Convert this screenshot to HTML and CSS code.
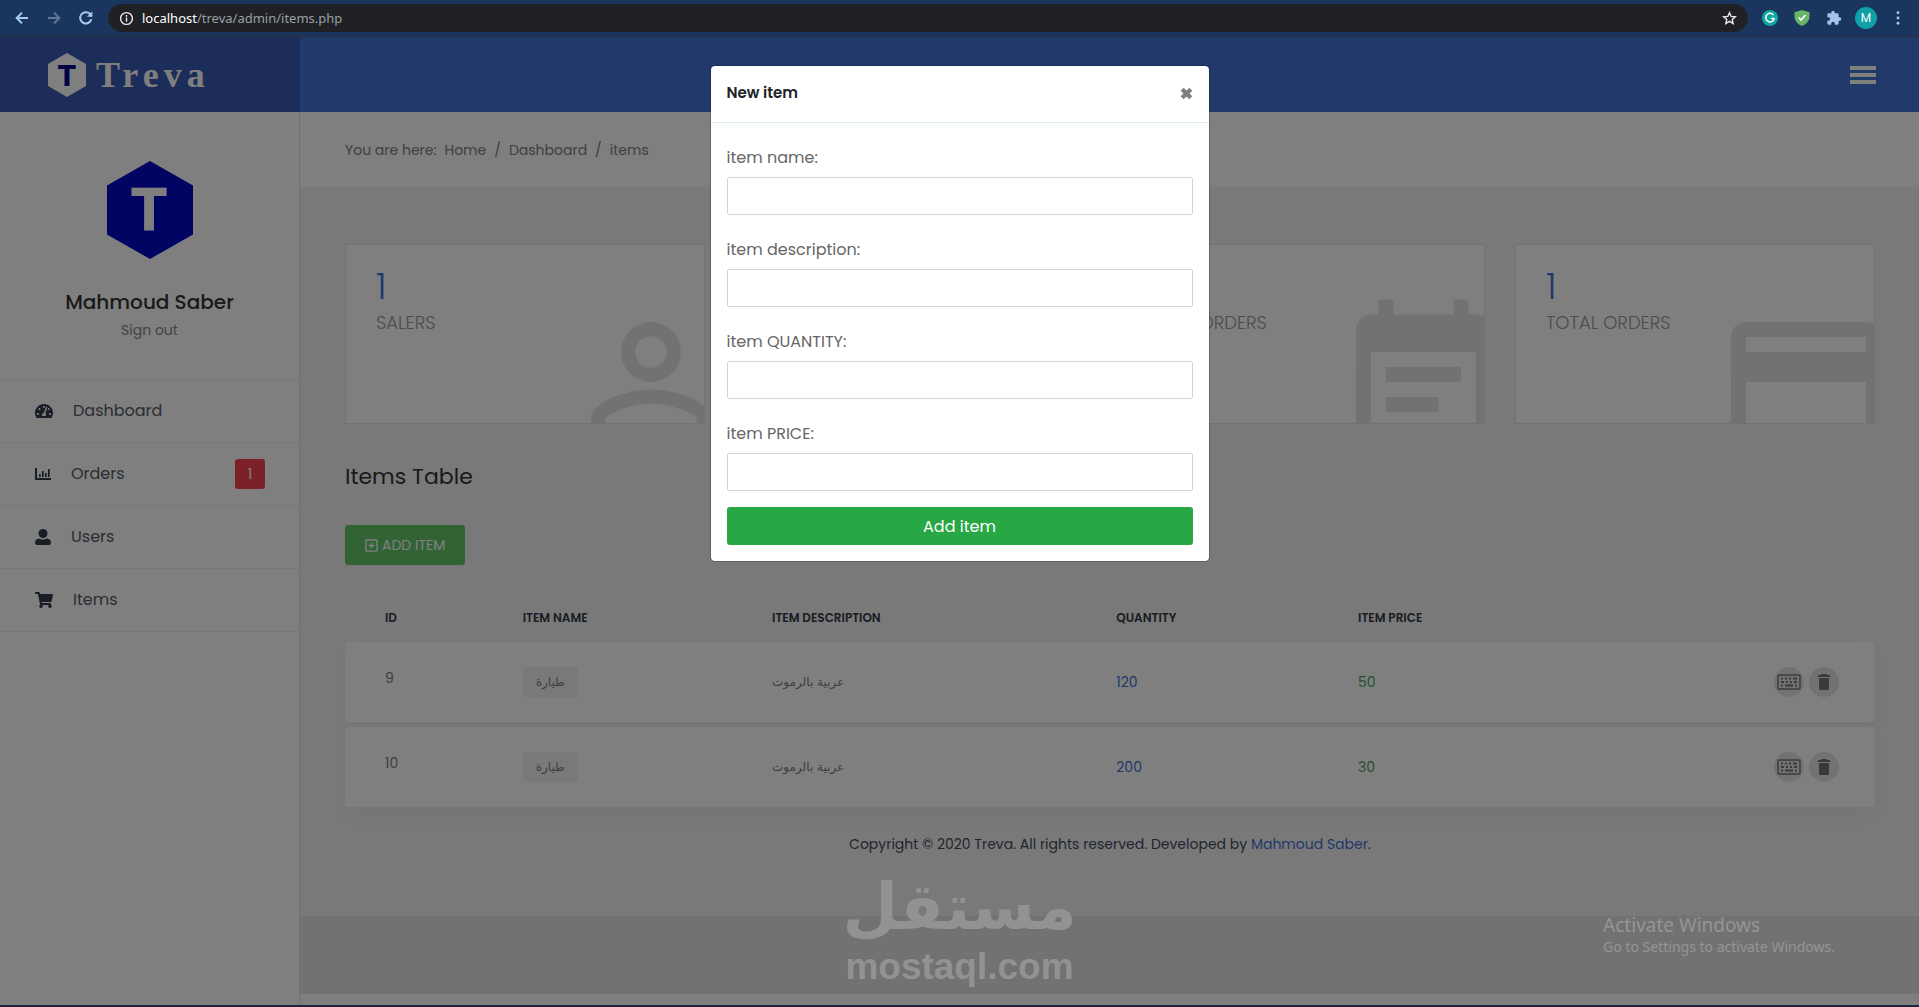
FILE: index.html
```html
<!DOCTYPE html>
<html lang="en">
<head>
  <meta charset="UTF-8">
  <meta name="viewport" content="width=device-width, initial-scale=1.0">
  <title>Treva - Items</title>
  <link rel="stylesheet" href="styles.css">
</head>
<body>
  <!-- BROWSER BAR -->
  <div class="browser-bar">
    <button class="browser-btn" aria-label="Back"><svg viewBox="0 0 24 24"><path d="M21 12H4M12 4l-8 8 8 8"/></svg></button>
    <button class="browser-btn browser-btn-off" aria-label="Forward"><svg viewBox="0 0 24 24"><path d="M3 12h17M12 4l8 8-8 8"/></svg></button>
    <button class="browser-btn" aria-label="Reload"><svg viewBox="0 0 24 24"><path d="M20 14a8.500 8.500 0 1 1-2-8l2.500 3"/><path d="M21.500 2v8h-8z" fill="currentColor" stroke="none"/></svg></button>
    <div class="address">
      <svg class="address-info" viewBox="0 0 16 16"><circle cx="8" cy="8" r="6.300"/><path d="M8 7v4.500M8 4.300v1.700"/></svg>
      <span class="address-url"><b>localhost</b>/treva/admin/items.php</span>
      <svg class="address-star" viewBox="0 0 16 16"><path d="M8 1.800l1.800 4 4.400.4-3.300 2.900 1 4.300L8 11.100l-3.900 2.300 1-4.300-3.300-2.900 4.400-.4z"/></svg>
    </div>
    <div class="extensions">
      <button class="browser-btn" aria-label="Grammar"><svg class="ext-g" viewBox="0 0 16 16"><circle cx="8" cy="8" r="8" fill="#11a8a0"/><path d="M11.500 5A4.300 4.300 0 1 0 12 9.500V8.600H9" fill="none" stroke="#fff" stroke-width="1.500"/></svg></button>
      <button class="browser-btn" aria-label="Shield"><svg class="ext-g" viewBox="0 0 16 16"><path d="M8 0l7.500 2.300v4.500C15.500 11 12 14.500 8 16 4 14.500.5 11 .5 6.800V2.300z" fill="#67b567"/><path d="M4.500 7.500l2.500 2.500 4.500-5" fill="none" stroke="#fff" stroke-width="1.600"/></svg></button>
      <button class="browser-btn" aria-label="Extensions"><svg class="ext-g" viewBox="0 0 24 24"><path fill="#a5c5e8" d="M20.500 11H19V7a2 2 0 0 0-2-2h-4V3.500a2.500 2.500 0 0 0-5 0V5H4a2 2 0 0 0-2 2v3.800h1.500a2.700 2.700 0 0 1 0 5.400H2V20a2 2 0 0 0 2 2h3.800v-1.500a2.700 2.700 0 0 1 5.400 0V22H17a2 2 0 0 0 2-2v-4h1.500a2.500 2.500 0 0 0 0-5z"/></svg></button>
      <button class="browser-btn" aria-label="Profile"><span class="avatar">M</span></button>
      <button class="browser-btn" aria-label="Menu"><svg viewBox="0 0 24 24"><g fill="#a5c5e8" stroke="none"><circle cx="12" cy="4" r="2.200"/><circle cx="12" cy="12" r="2.200"/><circle cx="12" cy="20" r="2.200"/></g></svg></button>
    </div>
  </div>

  <div class="page">
    <!-- SIDEBAR -->
    <aside class="sidebar">
      <a class="logo" href="#">
        <svg class="logo-mark" viewBox="0 0 38 44"><polygon points="19,0 38,11 38,33 19,44 0,33 0,11" fill="#fff"/><text class="mark-text" x="19" y="33" font-size="29" fill="#04048c">T</text></svg>
        <span class="logo-name">Treva</span>
      </a>
      <div class="account">
        <svg class="account-img" viewBox="0 0 86 98"><polygon points="43,0 86,24.500 86,73.500 43,98 0,73.500 0,24.500" fill="#0408c8"/><text class="mark-text" x="42" y="70" font-size="58" fill="#fff">T</text></svg>
        <h4>Mahmoud Saber</h4>
        <a href="#">Sign out</a>
      </div>
      <nav class="menu">
        <a href="#">
          <svg width="18" height="16" viewBox="0 0 576 512"><path d="M288 32C128.940 32 0 160.940 0 320c0 52.800 14.250 102.260 39.060 144.800 5.610 9.620 16.300 15.200 27.440 15.200h443c11.140 0 21.830-5.580 27.440-15.200C561.750 422.260 576 372.800 576 320c0-159.060-128.940-288-288-288zm0 64c14.710 0 26.580 10.130 30.320 23.650-1.110 2.260-2.640 4.230-3.450 6.670l-9.220 27.670c-5.130 3.490-10.970 6.010-17.640 6.010-17.670 0-32-14.330-32-32S270.330 96 288 96zM96 384c-17.670 0-32-14.330-32-32s14.330-32 32-32 32 14.330 32 32-14.330 32-32 32zm48-160c-17.670 0-32-14.330-32-32s14.330-32 32-32 32 14.330 32 32-14.330 32-32 32zm246.770-72.410l-61.330 184C343.130 347.330 352 364.540 352 384c0 11.720-3.380 22.550-8.880 32H232.880c-5.500-9.450-8.880-20.280-8.880-32 0-33.940 26.500-61.430 59.900-63.590l61.340-184.010c4.170-12.560 17.730-19.450 30.360-15.170 12.570 4.190 19.350 17.790 15.170 30.360zm14.660 57.200l15.520-46.550c3.470-1.290 7.130-2.230 11.050-2.230 17.670 0 32 14.330 32 32s-14.330 32-32 32c-11.380-.01-20.890-6.280-26.570-15.220zM480 384c-17.670 0-32-14.330-32-32s14.330-32 32-32 32 14.330 32 32-14.330 32-32 32z"/></svg>
          Dashboard
        </a>
        <a href="#">
          <svg width="16" height="16" viewBox="0 0 16 16"><path d="M0 2h2v10h14v2H0zM4 8h1.700v3H4zM7 5h1.700v6H7zM10 7h1.700v4H10zM13 3h1.700v8H13z"/></svg>
          Orders
          <span class="count">1</span>
        </a>
        <a href="#">
          <svg width="16" height="16" viewBox="0 0 16 16"><circle cx="8" cy="4.500" r="4.500"/><path d="M4 9.500c1 .6 2.500 1 4 1s3-.4 4-1c2.400.2 4 2 4 4V14a2 2 0 0 1-2 2H2a2 2 0 0 1-2-2v-.5c0-2 1.600-3.800 4-4z"/></svg>
          Users
        </a>
        <a href="#">
          <svg width="18" height="16" viewBox="0 0 576 512"><path d="M528.120 301.319l47.273-208C578.806 78.301 567.391 64 551.990 64H159.208l-9.166-44.810C147.758 8.021 137.930 0 126.529 0H24C10.745 0 0 10.745 0 24v16c0 13.255 10.745 24 24 24h69.883l70.248 343.435C147.325 417.100 136 435.222 136 456c0 30.928 25.072 56 56 56s56-25.072 56-56c0-15.674-6.447-29.835-16.824-40h209.647C430.447 426.165 424 440.326 424 456c0 30.928 25.072 56 56 56s56-25.072 56-56c0-22.172-12.888-41.332-31.579-50.405l5.517-24.276c3.413-15.018-8.002-29.319-23.403-29.319H218.117l-6.545-32h293.145c11.206 0 20.920-7.754 23.403-18.681z"/></svg>
          Items
        </a>
      </nav>
    </aside>

    <!-- MAIN -->
    <main class="main">
      <header class="topbar">
        <button class="hamburger" aria-label="Menu"><i></i><i></i><i></i></button>
      </header>
      <div class="breadcrumb">
        <span>You are here:</span>
        <a href="#">Home</a><span>/</span>
        <a href="#">Dashboard</a><span>/</span>
        <span>items</span>
      </div>

      <div class="content">
        <div class="stats">
          <div class="stat">
            <h2>1</h2>
            <p>salers</p>
            <svg class="stat-icon" viewBox="4 0 16 24"><path d="M12,4A4,4 0 0,1 16,8A4,4 0 0,1 12,12A4,4 0 0,1 8,8A4,4 0 0,1 12,4M12,5.900A2.100,2.100 0 1,0 14.100,8A2.100,2.100 0 0,0 12,5.900M12,13C14.670,13 20,14.330 20,17V20H4V17C4,14.330 9.330,13 12,13M12,14.900C9.030,14.900 5.900,16.360 5.900,17V18.100H18.100V17C18.100,16.360 14.970,14.900 12,14.900Z"/></svg>
          </div>
          <div class="stat"></div>
          <div class="stat">
            <h2>1</h2>
            <p>new orders</p>
            <svg class="stat-icon" viewBox="3 0 18 24"><path d="M17 10H7v2h10v-2zm2-7h-1V1h-2v2H8V1H6v2H5c-1.110 0-1.990.9-1.990 2L3 19a2 2 0 0 0 2 2h14c1.100 0 2-.9 2-2V5c0-1.100-.9-2-2-2zm0 16H5V8h14v11zm-5-5H7v2h7v-2z"/></svg>
          </div>
          <div class="stat">
            <h2>1</h2>
            <p>total orders</p>
            <svg class="stat-icon" viewBox="2 0 20 24"><path d="M20 4H4c-1.110 0-1.990.89-1.990 2L2 18c0 1.110.89 2 2 2h16c1.110 0 2-.89 2-2V6c0-1.110-.89-2-2-2zm0 14H4v-6h16v6zm0-10H4V6h16v2z"/></svg>
          </div>
        </div>

        <h3 class="title">Items Table</h3>
        <button class="btn-add">
          <svg viewBox="0 0 14 14"><rect x="1" y="1" width="12" height="12" rx="1"/><path d="M7 4v6M4 7h6"/></svg>
          add item
        </button>

        <table class="items">
          <thead>
            <tr>
              <th class="col-id">ID</th>
              <th class="col-name">item name</th>
              <th class="col-desc">item description</th>
              <th class="col-qty">quantity</th>
              <th class="col-price">item price</th>
              <th></th>
            </tr>
          </thead>
          <tbody>
            <tr>
              <td>9</td>
              <td><span class="tag" lang="ar">طيارة</span></td>
              <td lang="ar">عربية بالرموت</td>
              <td class="qty">120</td>
              <td class="price">50</td>
              <td>
                <div class="actions">
                  <button aria-label="Edit"><svg width="24" height="16" viewBox="0 0 24 16"><rect class="line" x="1" y="1" width="22" height="14" rx="1"/><path d="M4 3.500h2v2H4zM8 3.500h2v2H8zM12 3.500h2v2h-2zM16 3.500h4v2h-4zM4 7h3v2H4zM9 7h2v2H9zM13 7h2v2h-2zM17 7h3v2h-3zM4 10.500h2v2H4zM8 10.500h8v2H8zM18 10.500h2v2h-2z"/></svg></button>
                  <button aria-label="Delete"><svg width="12" height="16" viewBox="0 0 12 16"><path d="M3.500 0h5l.8 1H12v2H0V1h2.700zM1 4h10v10.500a1.500 1.500 0 0 1-1.500 1.500h-7A1.500 1.500 0 0 1 1 14.500z"/></svg></button>
                </div>
              </td>
            </tr>
            <tr>
              <td>10</td>
              <td><span class="tag" lang="ar">طيارة</span></td>
              <td lang="ar">عربية بالرموت</td>
              <td class="qty">200</td>
              <td class="price">30</td>
              <td>
                <div class="actions">
                  <button aria-label="Edit"><svg width="24" height="16" viewBox="0 0 24 16"><rect class="line" x="1" y="1" width="22" height="14" rx="1"/><path d="M4 3.500h2v2H4zM8 3.500h2v2H8zM12 3.500h2v2h-2zM16 3.500h4v2h-4zM4 7h3v2H4zM9 7h2v2H9zM13 7h2v2h-2zM17 7h3v2h-3zM4 10.500h2v2H4zM8 10.500h8v2H8zM18 10.500h2v2h-2z"/></svg></button>
                  <button aria-label="Delete"><svg width="12" height="16" viewBox="0 0 12 16"><path d="M3.500 0h5l.8 1H12v2H0V1h2.700zM1 4h10v10.500a1.500 1.500 0 0 1-1.500 1.500h-7A1.500 1.500 0 0 1 1 14.500z"/></svg></button>
                </div>
              </td>
            </tr>
          </tbody>
        </table>

        <p class="copyright">Copyright © 2020 Treva. All rights reserved. Developed by <a href="#">Mahmoud Saber</a>.</p>
      </div>
      <div class="main-end"></div>
    </main>

    <!-- MODAL -->
    <div class="overlay">
      <div class="modal" role="dialog" aria-labelledby="modal-title">
        <div class="modal-header">
          <h5 id="modal-title">New item</h5>
          <button class="close" aria-label="Close"><svg viewBox="0 0 12 12"><path d="M2 2l8 8M10 2l-8 8"/></svg></button>
        </div>
        <form class="modal-body">
          <div class="form-group">
            <label for="item-name">item name:</label>
            <input type="text" id="item-name">
          </div>
          <div class="form-group">
            <label for="item-description">item description:</label>
            <input type="text" id="item-description">
          </div>
          <div class="form-group">
            <label for="item-quantity">item QUANTITY:</label>
            <input type="text" id="item-quantity">
          </div>
          <div class="form-group">
            <label for="item-price">item PRICE:</label>
            <input type="text" id="item-price">
          </div>
          <button type="button" class="btn-submit">Add item</button>
        </form>
      </div>
    </div>

    <div class="mostaql">
      <span class="mostaql-ar" lang="ar">مستقل</span>
      <span class="mostaql-en">mostaql.com</span>
    </div>
    <div class="activate">
      <p class="activate-title">Activate Windows</p>
      <p>Go to Settings to activate Windows.</p>
    </div>
  </div>
</body>
</html>
```

FILE: styles.css
```css
* {
  box-sizing: border-box;
  margin: 0;
  padding: 0;
}
body {
  display: flex;
  flex-direction: column;
  min-height: 100vh;
  font-family: Poppins, Inter, sans-serif;
  font-size: 14px;
  line-height: 24px;
  color: #666;
}
a {
  color: inherit;
  text-decoration: none;
}
button {
  border: 0;
  background: none;
  font-family: inherit;
  cursor: pointer;
}

/* browser bar */
.browser-bar {
  display: flex;
  align-items: center;
  height: 37px;
  padding: 0 5px 0 6px;
  background: #1a355e;
  border-bottom: 1px solid #2b3038;
}
.browser-btn {
  display: flex;
  align-items: center;
  justify-content: center;
  width: 32px;
  height: 28px;
  color: #a5cdf0;
}
.browser-btn svg {
  width: 16px;
  height: 16px;
  fill: none;
  stroke: currentColor;
  stroke-width: 3;
}
.browser-btn .ext-g {
  stroke: none;
}
.browser-btn-off {
  color: #5d7896;
}
.address {
  display: flex;
  flex: 1;
  align-items: center;
  height: 28px;
  margin: 0 6px;
  padding: 0 11px;
  border-radius: 14px;
  background: #202124;
}
.address svg {
  width: 15px;
  height: 15px;
  fill: none;
  stroke: #e8eaed;
  stroke-width: 1.5;
}
.address-url {
  flex: 1;
  margin-left: 8px;
  font-family: "Noto Sans", sans-serif;
  font-size: 13px;
  color: #9aa0a6;
}
.address-url b {
  font-weight: 400;
  color: #fff;
}
.extensions {
  display: flex;
}
.avatar {
  width: 22px;
  height: 22px;
  border-radius: 50%;
  background: #11a0a8;
  color: #fff;
  font-size: 12px;
  line-height: 22px;
}

.page {
  position: relative;
  display: flex;
  flex: 1;
  background: #fff;
  border-bottom: 2px solid #1c2540;
}

/* sidebar */
.sidebar {
  width: 300px;
  border-right: 1px solid #e5e5e5;
}
.logo {
  display: flex;
  align-items: center;
  gap: 10px;
  width: 300px;
  height: 75px;
  padding-left: 48px;
  background: #375bb0;
}
.logo-mark {
  width: 38px;
  height: 44px;
}
.mark-text {
  font-family: "DejaVu Sans Condensed", "DejaVu Sans", sans-serif;
  font-weight: 700;
  text-anchor: middle;
}
.logo-name {
  font-family: "Liberation Serif", serif;
  font-size: 36px;
  font-weight: 700;
  letter-spacing: 5px;
  color: #fff;
}
.account {
  display: flex;
  flex-direction: column;
  align-items: center;
  padding: 49px 0 37px;
  border-bottom: 1px solid #f2f2f2;
  text-align: center;
}
.account-img {
  width: 86px;
  height: 98px;
}
.account h4 {
  margin: 31px 0 4px;
  font-size: 20px;
  font-weight: 500;
  color: #333;
}
.account a {
  color: #888;
}
.menu a {
  display: flex;
  align-items: center;
  gap: 20px;
  height: 63px;
  padding: 0 34px 0 35px;
  border-bottom: 1px solid #f0f0f0;
  font-size: 16px;
  color: #555b66;
}
.menu svg {
  fill: #303a4c;
}
.count {
  width: 30px;
  height: 30px;
  margin-left: auto;
  border-radius: 3px;
  background: #fa4251;
  color: #fff;
  font-size: 14px;
  line-height: 30px;
  text-align: center;
}

/* main */
.main {
  display: flex;
  flex: 1;
  flex-direction: column;
}
.topbar {
  display: flex;
  align-items: center;
  justify-content: flex-end;
  height: 75px;
  padding-right: 43px;
  background: #4272d7;
}
.hamburger {
  display: flex;
  flex-direction: column;
  gap: 3px;
}
.hamburger i {
  width: 26px;
  height: 4px;
  background: #fff;
}
.breadcrumb {
  display: flex;
  align-items: center;
  gap: 8px;
  height: 75px;
  padding: 0 45px;
  color: #808080;
}
.content {
  padding: 57px 44px 60px 45px;
  background: #f2f2f2;
}
.stats {
  display: grid;
  grid-template-columns: repeat(4, 1fr);
  gap: 30px;
}
.stat {
  position: relative;
  height: 180px;
  padding: 24px 30px;
  overflow: hidden;
  border: 1px solid #e5e5e5;
  background: #fff;
}
.stat h2 {
  font-size: 36px;
  font-weight: 300;
  line-height: 36px;
  color: #4272d7;
}
.stat p {
  margin-top: 6px;
  font-size: 18px;
  font-weight: 300;
  text-transform: uppercase;
  color: #999;
}
.stat-icon {
  position: absolute;
  right: -7px;
  bottom: -49px;
  height: 180px;
  fill: #e5e5e5;
}
.title {
  margin: 37px 0 32px;
  font-size: 22px;
  font-weight: 400;
  line-height: 32px;
  color: #333;
}
.btn-add {
  display: flex;
  align-items: center;
  gap: 4px;
  height: 40px;
  padding: 0 20px;
  border-radius: 3px;
  background: #63c76a;
  color: #fff;
  font-size: 14px;
  text-transform: uppercase;
}
.btn-add svg {
  width: 13px;
  height: 13px;
  fill: none;
  stroke: #fff;
  stroke-width: 1.5;
}

/* items table */
.items {
  width: 100%;
  margin-top: 15px;
  border-spacing: 0 5px;
  table-layout: fixed;
}
.col-id { width: 9%; }
.col-name { width: 16.3%; }
.col-desc { width: 22.5%; }
.col-qty { width: 15.8%; }
.col-price { width: 16%; }
.items th {
  padding: 23px 0 9px 40px;
  font-size: 12px;
  font-weight: 600;
  line-height: 20px;
  text-align: left;
  text-transform: uppercase;
  color: #333a48;
}
.items tbody tr {
  box-shadow: 0 10px 20px rgba(0, 0, 0, .03);
}
.items td {
  height: 80px;
  padding-left: 40px;
  background: #fff;
  color: #808080;
}
.items td:first-child {
  padding-bottom: 8px;
  border-radius: 3px 0 0 3px;
}
.items td:last-child {
  padding-right: 36px;
  border-radius: 0 3px 3px 0;
}
[lang="ar"] {
  font-family: "DejaVu Sans", sans-serif;
}
.items [lang="ar"] {
  font-size: 12px;
}
.tag {
  display: inline-block;
  padding: 3px 13px;
  border-radius: 3px;
  background: #f2f2f2;
}
.items .qty {
  color: #4272d7;
}
.items .price {
  color: #4fa25c;
}
.actions {
  display: flex;
  justify-content: flex-end;
  gap: 5px;
}
.actions button {
  display: flex;
  align-items: center;
  justify-content: center;
  width: 30px;
  height: 30px;
  border-radius: 50%;
  background: #e5e5e5;
}
.actions svg {
  fill: #777;
}
.actions .line {
  fill: none;
  stroke: #777;
  stroke-width: 1.5;
}
.copyright {
  margin-top: 20px;
  text-align: center;
  color: #444c5c;
}
.copyright a {
  color: #4272d7;
}
.main-end {
  flex: 1;
  margin-bottom: 11px;
  background: #e5e5e5;
}

/* modal */
.overlay {
  position: absolute;
  inset: 0;
  padding-top: 28px;
  background: rgba(0, 0, 0, .5);
}
.modal {
  width: 500px;
  margin: 0 auto;
  border: 1px solid rgba(0, 0, 0, .2);
  border-radius: 5px;
  background: #fff;
  background-clip: padding-box;
}
.modal-header {
  display: flex;
  justify-content: space-between;
  height: 57px;
  padding: 15px 16px;
  border-bottom: 1px solid #d8f0f5;
}
.modal-header h5 {
  font-size: 15px;
  font-weight: 600;
  color: #212529;
}
.close {
  height: 24px;
}
.close svg {
  display: block;
  width: 13px;
  height: 13px;
  stroke: #7f7f7f;
  stroke-width: 4;
}
.modal-body {
  padding: 23px 16px 16px;
}
.form-group {
  margin-bottom: 23px;
}
.form-group:last-of-type {
  margin-bottom: 16px;
}
.form-group label {
  display: block;
  margin-bottom: 7px;
  font-size: 16px;
}
.form-group input {
  display: block;
  width: 100%;
  height: 38px;
  padding: 6px 12px;
  border: 1px solid #ced4da;
  border-radius: 2px;
  font: inherit;
}
.btn-submit {
  width: 100%;
  height: 38px;
  border-radius: 3px;
  background: #28a745;
  color: #fff;
  font-size: 16px;
}

/* watermarks */
.mostaql {
  position: absolute;
  right: 0;
  bottom: 18px;
  left: 0;
  display: flex;
  flex-direction: column;
  align-items: center;
  color: #929292;
  font-weight: 700;
  pointer-events: none;
}
.mostaql-ar {
  font-size: 64px;
  line-height: 80px;
}
.mostaql-en {
  font-family: "Liberation Sans", sans-serif;
  font-size: 37px;
  line-height: 40px;
}
.activate {
  position: absolute;
  right: 84px;
  bottom: 48px;
  color: #959595;
  font-family: "Noto Sans", sans-serif;
  font-size: 14px;
  line-height: 20px;
  pointer-events: none;
}
.activate-title {
  font-size: 19px;
  line-height: 24px;
}
```
